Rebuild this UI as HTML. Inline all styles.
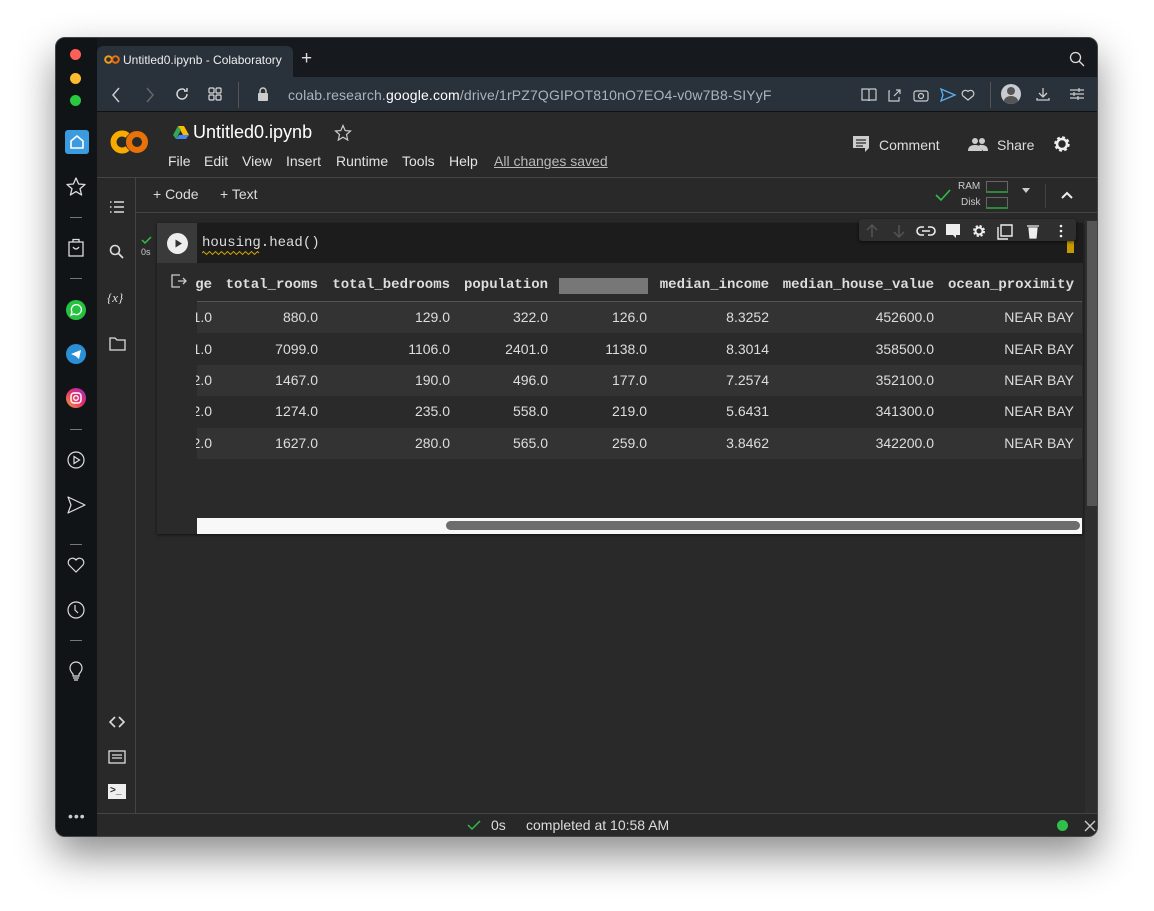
<!DOCTYPE html><html><head><meta charset="utf-8"><style>
*{margin:0;padding:0;box-sizing:border-box}
body{width:1154px;height:911px;background:#fff;position:relative;overflow:hidden;font-family:"Liberation Sans",sans-serif;color:#ddd}
.a{position:absolute}
#win{left:55px;top:37px;width:1043px;height:800px;border-radius:10px;background:#292929;overflow:hidden;box-shadow:0 18px 40px rgba(0,0,0,.45);border:1px solid #444}
.mono{font-family:"Liberation Mono",monospace}
.hd{font-family:"Liberation Mono",monospace;font-weight:bold;font-size:14px;color:#ddd;top:277px;white-space:nowrap}
.c{font-size:14px;color:#ddd;text-align:right}
.m{position:absolute;top:115px;font-size:14px;color:#e3e3e3}
svg{position:absolute}
</style></head><body>
<div id="win" class="a">
<div class="a" style="left:0;top:0;width:41px;height:800px;background:#111417"></div>
<div class="a" style="left:14px;top:11px;width:11px;height:11px;border-radius:50%;background:#fe5f57"></div>
<div class="a" style="left:14px;top:35px;width:11px;height:11px;border-radius:50%;background:#febc2e"></div>
<div class="a" style="left:14px;top:57px;width:11px;height:11px;border-radius:50%;background:#28c840"></div>
<div class="a" style="left:9px;top:92px;width:24px;height:24px;border-radius:3px;background:#3a9be0"></div>
<svg style="left:9px;top:92px" width="24" height="24"><path d="M6 18V11L12 6 18 11V18Z" fill="none" stroke="#fff" stroke-width="1.6" stroke-linejoin="round"/></svg>
<svg style="left:9px;top:138px" width="22" height="22"><path d="M11 2 13.6 8 20 8.5 15 12.7 16.6 19 11 15.6 5.4 19 7 12.7 2 8.5 8.4 8Z" fill="none" stroke="#ddd" stroke-width="1.3" stroke-linejoin="round"/></svg>
<div class="a" style="left:14px;top:179px;width:12px;height:1px;background:#777"></div>
<svg style="left:10px;top:198px" width="20" height="22"><path d="M3 6H17V20H3Z M7 6V3.5H13V6 M7 11Q10 15 13 11" fill="none" stroke="#ddd" stroke-width="1.3"/></svg>
<div class="a" style="left:14px;top:240px;width:12px;height:1px;background:#777"></div>
<div class="a" style="left:10px;top:262px;width:20px;height:20px;border-radius:50%;background:#25c240"></div>
<svg style="left:10px;top:262px" width="20" height="20"><path d="M5 15 6 12A5 5 0 1 1 8 14Z" fill="none" stroke="#fff" stroke-width="1.3"/></svg>
<div class="a" style="left:10px;top:306px;width:20px;height:20px;border-radius:50%;background:#2a8fd6"></div>
<svg style="left:10px;top:306px" width="20" height="20"><path d="M5 10 15 6 13 15 9.5 12Z" fill="#fff"/></svg>
<div class="a" style="left:10px;top:350px;width:20px;height:20px;border-radius:50%;background:linear-gradient(45deg,#f9a23b,#e1306c,#a02fc0)"></div>
<svg style="left:10px;top:350px" width="20" height="20"><rect x="5" y="5" width="10" height="10" rx="3" fill="none" stroke="#fff" stroke-width="1.4"/><circle cx="10" cy="10" r="2.3" fill="none" stroke="#fff" stroke-width="1.3"/></svg>
<div class="a" style="left:14px;top:391px;width:12px;height:1px;background:#777"></div>
<svg style="left:10px;top:412px" width="20" height="20"><circle cx="10" cy="10" r="8" fill="none" stroke="#ddd" stroke-width="1.2"/><path d="M8 6.5 13.5 10 8 13.5Z" fill="none" stroke="#ddd" stroke-width="1.2"/></svg>
<svg style="left:10px;top:457px" width="22" height="20"><path d="M2 2 19 10 2 18 5 10Z" fill="none" stroke="#ddd" stroke-width="1.2" stroke-linejoin="round"/></svg>
<div class="a" style="left:14px;top:506px;width:12px;height:1px;background:#777"></div>
<svg style="left:10px;top:518px" width="20" height="18"><path d="M10 16 3 9A4 4 0 0 1 10 4 4 4 0 0 1 17 9Z" fill="none" stroke="#ddd" stroke-width="1.2"/></svg>
<svg style="left:10px;top:562px" width="20" height="20"><circle cx="10" cy="10" r="8" fill="none" stroke="#ddd" stroke-width="1.2"/><path d="M9 5V10L12 13" fill="none" stroke="#ddd" stroke-width="1.2"/></svg>
<div class="a" style="left:14px;top:602px;width:12px;height:1px;background:#777"></div>
<svg style="left:10px;top:622px" width="20" height="22"><path d="M7 14Q4 11 4 8A6 6 0 0 1 16 8Q16 11 13 14V16H7Z M7 18H13 M8 20H12" fill="none" stroke="#ddd" stroke-width="1.2"/></svg>
<div class="a" style="left:12px;top:770px;color:#ccc;font-size:14px;letter-spacing:1px">•••</div>
<div class="a" style="left:41px;top:0;width:1002px;height:39px;background:#16191d"></div>
<div class="a" style="left:41px;top:8px;width:196px;height:31px;background:#29313b;border-radius:6px 6px 0 0"></div>
<svg style="left:48px;top:17px" width="16" height="9"><circle cx="4.5" cy="4.5" r="3.3" fill="none" stroke="#f29b1d" stroke-width="2"/><circle cx="11.5" cy="4.5" r="3.3" fill="none" stroke="#e8710a" stroke-width="2"/></svg>
<div class="a" style="left:67px;top:15px;font-size:12px;color:#eee">Untitled0.ipynb - Colaboratory</div>
<div class="a" style="left:245px;top:10px;font-size:19px;color:#ddd">+</div>
<svg style="left:1013px;top:13px" width="16" height="16"><circle cx="6.5" cy="6.5" r="5" fill="none" stroke="#ddd" stroke-width="1.3"/><path d="M10 10 15 15" stroke="#ddd" stroke-width="1.3"/></svg>
<div class="a" style="left:41px;top:39px;width:1002px;height:35px;background:#29313b;border-bottom:1px solid #111"></div>
<svg style="left:55px;top:49px" width="10" height="16"><path d="M8 1 2 8 8 15" fill="none" stroke="#ccc" stroke-width="1.5"/></svg>
<svg style="left:89px;top:49px" width="10" height="16"><path d="M2 1 8 8 2 15" fill="none" stroke="#666" stroke-width="1.5"/></svg>
<svg style="left:118px;top:48px" width="16" height="16"><path d="M13 8A5 5 0 1 1 11 4 M13 2V5H10" fill="none" stroke="#ddd" stroke-width="1.4"/></svg>
<svg style="left:152px;top:49px" width="14" height="14"><g fill="none" stroke="#ddd" stroke-width="1.2"><rect x="1" y="1" width="5" height="5" rx="1"/><rect x="8" y="1" width="5" height="5" rx="1"/><rect x="1" y="8" width="5" height="5" rx="1"/><rect x="8" y="8" width="5" height="5" rx="1"/></g></svg>
<div class="a" style="left:182px;top:44px;width:1px;height:26px;background:#555"></div>
<svg style="left:201px;top:49px" width="12" height="14"><rect x="1" y="6" width="10" height="8" rx="1" fill="#ccc"/><path d="M3 6V4A3 3 0 0 1 9 4V6" fill="none" stroke="#ccc" stroke-width="1.5"/></svg>
<div class="a" style="left:232px;top:49px;font-size:14px;color:#aab3bd;letter-spacing:.15px">colab.research.<span style="color:#fff">google.com</span>/drive/1rPZ7QGIPOT810nO7EO4-v0w7B8-SIYyF</div>
<svg style="left:805px;top:48px" width="190" height="18"><g fill="none" stroke="#ccc" stroke-width="1.2"><path d="M1 3H7Q8 3 8 5V15Q8 14 6 14H1Z M15 3H9Q8 3 8 5 M15 3V14H10Q8 14 8 15"/><path d="M29 5H28V15H38V11 M33 10 39 4 M35 4H39V8"/><rect x="53" y="5" width="14" height="10" rx="2"/><circle cx="60" cy="10" r="2.5"/><path d="M107 14 102 10A3 3 0 0 1 107 5.5 3 3 0 0 1 112 10Z"/></g><path d="M80 3 94 9 80 15 82 9Z" fill="none" stroke="#5ab0f0" stroke-width="1.3"/></svg>
<div class="a" style="left:934px;top:44px;width:1px;height:26px;background:#555"></div>
<div class="a" style="left:945px;top:46px;width:20px;height:20px;border-radius:50%;background:#c8ccd2;overflow:hidden"><div class="a" style="left:6px;top:3px;width:8px;height:8px;border-radius:50%;background:#555"></div><div class="a" style="left:3px;top:12px;width:14px;height:10px;border-radius:50%;background:#555"></div></div>
<svg style="left:979px;top:48px" width="16" height="16"><path d="M8 2V11 M4 7 8 11 12 7 M2 12V14H14V12" fill="none" stroke="#ccc" stroke-width="1.3"/></svg>
<svg style="left:1013px;top:49px" width="16" height="14"><path d="M1 3H15 M1 7H15 M1 11H15 M10 1V5 M5 5V9 M9 9V13" fill="none" stroke="#ccc" stroke-width="1.2"/></svg>
<svg style="left:54px;top:91px" width="40" height="26"><path d="M17.5 6.5A8.5 8.5 0 1 0 17.5 19.5" fill="none" stroke="#f9ab00" stroke-width="6"/><circle cx="27" cy="13" r="8" fill="none" stroke="#e8710a" stroke-width="6"/></svg>
<svg style="left:116px;top:87px" width="18" height="15"><path d="M6 1H12L17 10H11Z" fill="#fbbc04"/><path d="M6 1 1 10 4 14 9 5Z" fill="#34a853"/><path d="M4 14H14L17 10H7Z" fill="#4285f4"/></svg>
<div class="a" style="left:137px;top:84px;font-size:18px;color:#fff">Untitled0.ipynb</div>
<svg style="left:278px;top:86px" width="18" height="18"><path d="M9 1.5 11.2 6.6 16.5 7 12.5 10.6 13.7 16 9 13.2 4.3 16 5.5 10.6 1.5 7 6.8 6.6Z" fill="none" stroke="#ccc" stroke-width="1.2"/></svg>
<div class="m" style="left:112px">File</div><div class="m" style="left:148px">Edit</div><div class="m" style="left:186px">View</div><div class="m" style="left:230px">Insert</div><div class="m" style="left:280px">Runtime</div><div class="m" style="left:346px">Tools</div><div class="m" style="left:393px">Help</div>
<div class="a" style="left:438px;top:115px;font-size:14px;color:#bbb;text-decoration:underline">All changes saved</div>
<svg style="left:796px;top:97px" width="18" height="18"><path d="M1 1H17V13H1Z M13 13V17L17 13" fill="#ccc"/><path d="M4 5H14M4 8H14M4 11H11" stroke="#292929" stroke-width="1.2"/></svg>
<div class="a" style="left:823px;top:99px;font-size:14px;color:#ddd">Comment</div>
<svg style="left:912px;top:99px" width="20" height="14"><circle cx="7" cy="4" r="3" fill="#ccc"/><circle cx="14" cy="4" r="3" fill="#ccc"/><path d="M0 14Q0 8 7 8 14 8 14 14Z M11 8Q20 7 20 14H15" fill="#ccc"/></svg>
<div class="a" style="left:941px;top:99px;font-size:14px;color:#ddd">Share</div>
<svg style="left:997px;top:97px" width="18" height="18"><circle cx="9" cy="9" r="6" fill="none" stroke="#eee" stroke-width="3.5" stroke-dasharray="2.6 2.1"/><circle cx="9" cy="9" r="5" fill="none" stroke="#eee" stroke-width="2.5"/></svg>
<div class="a" style="left:41px;top:139px;width:1002px;height:1px;background:#444"></div>
<div class="a" style="left:79px;top:140px;width:1px;height:635px;background:#444"></div>
<svg style="left:53px;top:162px" width="16" height="14"><path d="M1 2H2.5M5 2H15M1 7H2.5M5 7H15M1 12H2.5M5 12H15" stroke="#ddd" stroke-width="1.6"/></svg>
<svg style="left:53px;top:206px" width="16" height="16"><circle cx="6" cy="6" r="4.5" fill="none" stroke="#ddd" stroke-width="1.6"/><path d="M9.5 9.5 14 14" stroke="#ddd" stroke-width="1.8"/></svg>
<div class="a" style="left:51px;top:252px;font-size:13px;color:#ddd;font-family:'Liberation Serif',serif;font-style:italic">{<i>x</i>}</div>
<svg style="left:53px;top:299px" width="17" height="14"><path d="M1 1H6L8 3H16V13H1Z" fill="none" stroke="#ddd" stroke-width="1.3"/></svg>
<svg style="left:53px;top:678px" width="16" height="12"><path d="M6 1 1 6 6 11M10 1 15 6 10 11" fill="none" stroke="#ddd" stroke-width="1.6"/></svg>
<svg style="left:52px;top:712px" width="18" height="14"><rect x="1" y="1" width="16" height="12" fill="none" stroke="#ddd" stroke-width="1.3"/><path d="M4 5H14M4 8H14" stroke="#ddd" stroke-width="1.2"/></svg>
<div class="a" style="left:52px;top:746px;width:18px;height:15px;background:#eee"></div>
<div class="a" style="left:54px;top:747px;font-size:10px;color:#292929;font-weight:bold">&gt;_</div>
<div class="a" style="left:97px;top:148px;font-size:14px;color:#ddd">+ Code</div>
<div class="a" style="left:164px;top:148px;font-size:14px;color:#ddd">+ Text</div>
<svg style="left:878px;top:150px" width="18" height="14"><path d="M2 7 7 12 16 2" fill="none" stroke="#2fbf4a" stroke-width="1.6"/></svg>
<div class="a" style="left:902px;top:143px;font-size:10px;color:#ccc">RAM</div>
<div class="a" style="left:905px;top:159px;font-size:10px;color:#ccc">Disk</div>
<div class="a" style="left:930px;top:143px;width:22px;height:12px;border:1px solid #666;border-bottom:2px solid #2a8a3a"></div>
<div class="a" style="left:930px;top:159px;width:22px;height:12px;border:1px solid #666;border-bottom:2px solid #2a8a3a"></div>
<div class="a" style="left:966px;top:150px;width:0;height:0;border:4px solid transparent;border-top:5px solid #ccc"></div>
<div class="a" style="left:989px;top:146px;width:1px;height:24px;background:#444"></div>
<svg style="left:1004px;top:152px" width="14" height="10"><path d="M2 8 7 3 12 8" fill="none" stroke="#eee" stroke-width="2"/></svg>
<div class="a" style="left:80px;top:174px;width:963px;height:1px;background:#444"></div>
<svg style="left:85px;top:197px" width="12" height="10"><path d="M1 5 4 8 10 2" fill="none" stroke="#2fbf4a" stroke-width="1.5"/></svg>
<div class="a" style="left:85px;top:209px;font-size:9px;color:#ccc">0s</div>
<div class="a" style="left:101px;top:185px;width:926px;height:311px;background:#2a2a2a;box-shadow:0 1px 3px rgba(0,0,0,.6)"></div>
<div class="a" style="left:101px;top:185px;width:40px;height:40px;background:#3a3a3a"></div>
<div class="a" style="left:111px;top:195px;width:21px;height:21px;border-radius:50%;background:#eee"></div>
<svg style="left:111px;top:195px" width="21" height="21"><path d="M8.5 6.5 15 10.5 8.5 14.5Z" fill="#333"/></svg>
<div class="a" style="left:141px;top:185px;width:886px;height:40px;background:#1c1c1c"></div>
<div class="a mono" style="left:146px;top:197px;font-size:14px;color:#ddd">housing.head()</div>
<svg style="left:146px;top:213px" width="60" height="4"><path d="M0 2 1.5 0.5 3 2 4.5 3.5 6 2 7.5 .5 9 2 10.5 3.5 12 2 13.5 .5 15 2 16.5 3.5 18 2 19.5 .5 21 2 22.5 3.5 24 2 25.5 .5 27 2 28.5 3.5 30 2 31.5 .5 33 2 34.5 3.5 36 2 37.5 .5 39 2 40.5 3.5 42 2 43.5 .5 45 2 46.5 3.5 48 2 49.5 .5 51 2 52.5 3.5 54 2 55.5 .5 57 2" fill="none" stroke="#c8a000" stroke-width="1"/></svg>
<div class="a" style="left:1011px;top:203px;width:7px;height:12px;background:#c49a00"></div>
<div class="a" style="left:803px;top:181px;width:217px;height:22px;background:#2f2f2f;border-radius:3px;box-shadow:0 1px 3px rgba(0,0,0,.6)"></div>
<svg style="left:808px;top:184px" width="210" height="18"><g fill="none" stroke="#555" stroke-width="1.4"><path d="M8 15V3M3 8 8 3 13 8M35 3V15M30 10 35 15 40 10"/></g><g fill="none" stroke="#eee" stroke-width="1.6"><path d="M58 9H66M60 5H57A4 4 0 0 0 57 13H60M64 5H67A4 4 0 0 1 67 13H64"/></g><path d="M82 2H96V13H92V16L89 13H82Z" fill="#eee"/><circle cx="115" cy="9" r="4.5" fill="none" stroke="#eee" stroke-width="3" stroke-dasharray="2 1.6"/><circle cx="115" cy="9" r="3.5" fill="none" stroke="#eee" stroke-width="2"/><path d="M137 3H148V14H137Z M134 5V17H144" fill="none" stroke="#eee" stroke-width="1.4"/><path d="M163 4H175M165 6H173L172 16H166Z" fill="#eee" stroke="#eee" stroke-width="1.2"/><circle cx="197" cy="4" r="1.3" fill="#eee"/><circle cx="197" cy="9" r="1.3" fill="#eee"/><circle cx="197" cy="14" r="1.3" fill="#eee"/></svg>
<svg style="left:115px;top:236px" width="16" height="14"><path d="M9 1H1V13H9 M7 7H15M12 4 15 7 12 10" fill="none" stroke="#ccc" stroke-width="1.3"/></svg>
<div class="a" style="left:141px;top:225px;width:886px;height:271px;overflow:hidden">
 <div class="a" style="left:0;top:38px;width:885px;height:1px;background:#555"></div>
 <div class="a" style="left:0;top:39px;width:885px;height:31px;background:#333"></div>
 <div class="a" style="left:0;top:102px;width:885px;height:31px;background:#333"></div>
 <div class="a" style="left:0;top:165px;width:885px;height:31px;background:#333"></div>
 <div class="a" style="left:362px;top:15px;width:89px;height:16px;background:#777"></div>
 <div class="a" style="left:0;top:255px;width:885px;height:16px;background:#f8f8f8"></div>
 <div class="a" style="left:249px;top:258px;width:634px;height:9px;border-radius:5px;background:#6d6d6d"></div>
</div>
<div class="a" style="left:1029px;top:182px;width:14px;height:593px;background:#2e2e2e"></div>
<div class="a" style="left:1031px;top:183px;width:11px;height:285px;background:#555"></div>
<div class="a" style="left:41px;top:775px;width:1002px;height:25px;background:#282828;border-top:1px solid #444"></div>
<svg style="left:411px;top:781px" width="14" height="12"><path d="M1 6 5 10 13 2" fill="none" stroke="#2fbf4a" stroke-width="1.4"/></svg>
<div class="a" style="left:435px;top:779px;font-size:14px;color:#ddd">0s</div>
<div class="a" style="left:470px;top:779px;font-size:14px;color:#ddd">completed at 10:58 AM</div>
<div class="a" style="left:1001px;top:782px;width:11px;height:11px;border-radius:50%;background:#2fbf4a"></div>
<svg style="left:1028px;top:782px" width="12" height="12"><path d="M1 1 11 11M11 1 1 11" stroke="#ccc" stroke-width="1.4"/></svg>
</div>
<div class="a" style="left:0;top:0;width:1154px;height:911px;pointer-events:none">
<div class="a hd" style="left:196px;width:16px;text-align:right;overflow:hidden;direction:rtl">ge</div>
<div class="a hd" style="left:218px;width:100px;text-align:right">total_rooms</div>
<div class="a hd" style="left:320px;width:130px;text-align:right">total_bedrooms</div>
<div class="a hd" style="left:450px;width:98px;text-align:right">population</div>
<div class="a hd" style="left:650px;width:119px;text-align:right">median_income</div>
<div class="a hd" style="left:770px;width:164px;text-align:right">median_house_value</div>
<div class="a hd" style="left:940px;width:134px;text-align:right">ocean_proximity</div>
</div>
<div class="a" style="left:0;top:0">
<div class="a c" style="left:180px;top:309px;width:32px;clip-path:inset(0 0 0 16px)">1.0</div>
<div class="a c" style="left:180px;top:341px;width:32px;clip-path:inset(0 0 0 16px)">1.0</div>
<div class="a c" style="left:180px;top:372px;width:32px;clip-path:inset(0 0 0 16px)">2.0</div>
<div class="a c" style="left:180px;top:403px;width:32px;clip-path:inset(0 0 0 16px)">2.0</div>
<div class="a c" style="left:180px;top:435px;width:32px;clip-path:inset(0 0 0 16px)">2.0</div>
<div class="a c" style="left:218px;top:309px;width:100px">880.0</div><div class="a c" style="left:320px;top:309px;width:130px">129.0</div><div class="a c" style="left:450px;top:309px;width:98px">322.0</div><div class="a c" style="left:550px;top:309px;width:97px">126.0</div><div class="a c" style="left:650px;top:309px;width:119px">8.3252</div><div class="a c" style="left:770px;top:309px;width:164px">452600.0</div><div class="a c" style="left:940px;top:309px;width:134px">NEAR BAY</div>
<div class="a c" style="left:218px;top:341px;width:100px">7099.0</div><div class="a c" style="left:320px;top:341px;width:130px">1106.0</div><div class="a c" style="left:450px;top:341px;width:98px">2401.0</div><div class="a c" style="left:550px;top:341px;width:97px">1138.0</div><div class="a c" style="left:650px;top:341px;width:119px">8.3014</div><div class="a c" style="left:770px;top:341px;width:164px">358500.0</div><div class="a c" style="left:940px;top:341px;width:134px">NEAR BAY</div>
<div class="a c" style="left:218px;top:372px;width:100px">1467.0</div><div class="a c" style="left:320px;top:372px;width:130px">190.0</div><div class="a c" style="left:450px;top:372px;width:98px">496.0</div><div class="a c" style="left:550px;top:372px;width:97px">177.0</div><div class="a c" style="left:650px;top:372px;width:119px">7.2574</div><div class="a c" style="left:770px;top:372px;width:164px">352100.0</div><div class="a c" style="left:940px;top:372px;width:134px">NEAR BAY</div>
<div class="a c" style="left:218px;top:403px;width:100px">1274.0</div><div class="a c" style="left:320px;top:403px;width:130px">235.0</div><div class="a c" style="left:450px;top:403px;width:98px">558.0</div><div class="a c" style="left:550px;top:403px;width:97px">219.0</div><div class="a c" style="left:650px;top:403px;width:119px">5.6431</div><div class="a c" style="left:770px;top:403px;width:164px">341300.0</div><div class="a c" style="left:940px;top:403px;width:134px">NEAR BAY</div>
<div class="a c" style="left:218px;top:435px;width:100px">1627.0</div><div class="a c" style="left:320px;top:435px;width:130px">280.0</div><div class="a c" style="left:450px;top:435px;width:98px">565.0</div><div class="a c" style="left:550px;top:435px;width:97px">259.0</div><div class="a c" style="left:650px;top:435px;width:119px">3.8462</div><div class="a c" style="left:770px;top:435px;width:164px">342200.0</div><div class="a c" style="left:940px;top:435px;width:134px">NEAR BAY</div>
</div>
</body></html>
